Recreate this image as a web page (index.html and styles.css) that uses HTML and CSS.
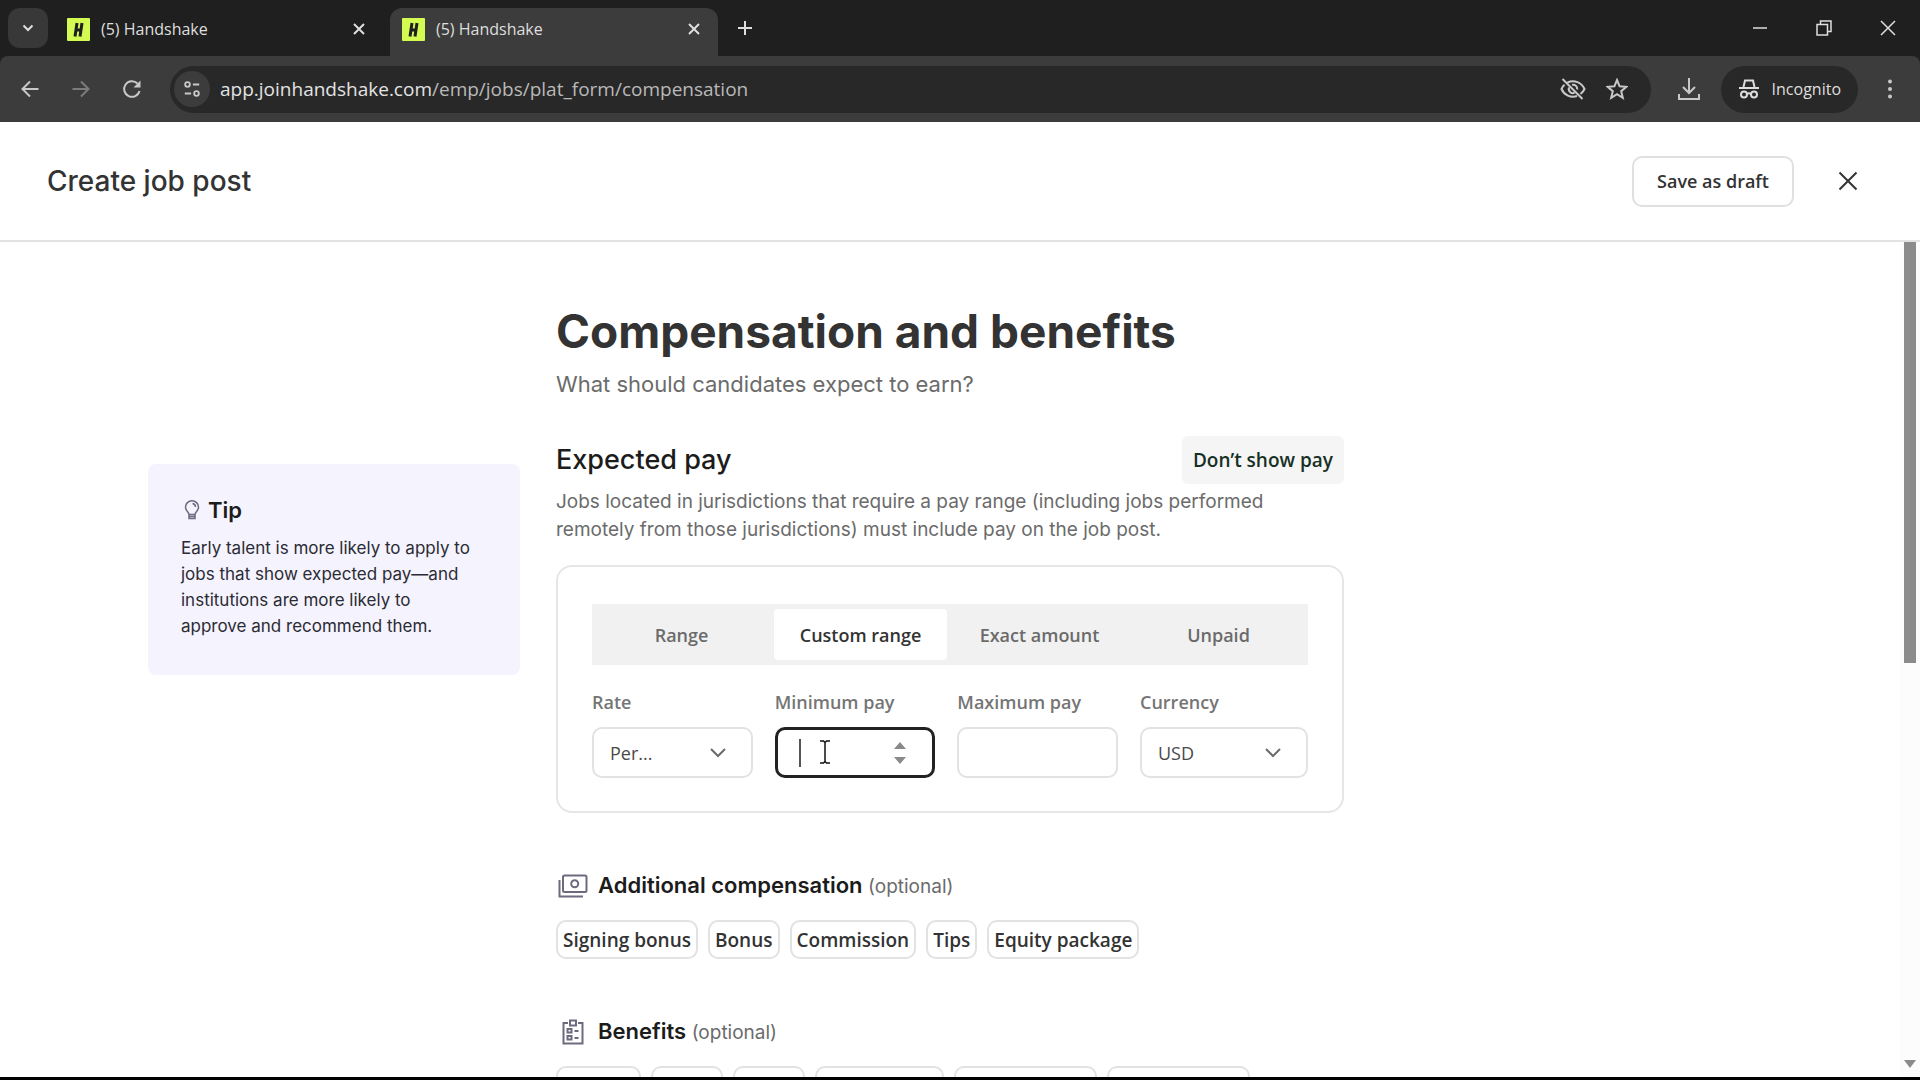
FILE: index.html
```html
<!DOCTYPE html>
<html lang="en">
<head>
    <meta charset="UTF-8">
    <meta name="viewport" content="width=device-width, initial-scale=1.0">
    <title>Handshake</title>
    <link rel="stylesheet" href="styles.css">
</head>
<body>
    <div class="browser">
        <div class="tab-strip">
            <button class="tab-search" aria-label="Search tabs">
                <svg width="14" height="14" viewBox="0 0 14 14"><path d="M2.500 4.500L7 9L11.500 4.500"/></svg>
            </button>
            <div class="tab">
                <svg class="favicon" viewBox="0 0 23 23"><rect width="23" height="23" rx="1"/><path d="M10 5L8 18.500M15 5L13 18.500M9 12H14"/></svg>
                <span class="tab-title">(5) Handshake</span>
                <button class="icon-button" aria-label="Close tab">
                    <svg width="12" height="12" viewBox="0 0 12 12"><path d="M1 1L11 11M11 1L1 11"/></svg>
                </button>
            </div>
            <div class="tab tab-active">
                <svg class="favicon" viewBox="0 0 23 23"><rect width="23" height="23" rx="1"/><path d="M10 5L8 18.500M15 5L13 18.500M9 12H14"/></svg>
                <span class="tab-title">(5) Handshake</span>
                <button class="icon-button" aria-label="Close tab">
                    <svg width="12" height="12" viewBox="0 0 12 12"><path d="M1 1L11 11M11 1L1 11"/></svg>
                </button>
            </div>
            <button class="icon-button new-tab" aria-label="New tab">
                <svg width="16" height="16" viewBox="0 0 16 16"><path d="M8 1V15M1 8H15"/></svg>
            </button>
            <div class="window-controls">
                <button class="icon-button" aria-label="Minimize">
                    <svg width="16" height="16" viewBox="0 0 16 16"><path d="M1 8H15"/></svg>
                </button>
                <button class="icon-button" aria-label="Restore">
                    <svg width="16" height="16" viewBox="0 0 16 16"><path d="M1 4.500H11.500V15H1ZM4.500 4.500V1H15V11.500H11.500"/></svg>
                </button>
                <button class="icon-button" aria-label="Close window">
                    <svg width="16" height="16" viewBox="0 0 16 16"><path d="M1 1L15 15M15 1L1 15"/></svg>
                </button>
            </div>
        </div>

        <div class="toolbar">
            <div class="nav-buttons">
                <button class="icon-button" aria-label="Back">
                    <svg width="20" height="20" viewBox="0 0 20 20"><path d="M18.500 10H2.500M10 2.500L2.500 10L10 17.500"/></svg>
                </button>
                <button class="icon-button dim" aria-label="Forward">
                    <svg width="20" height="20" viewBox="0 0 20 20"><path d="M1.500 10H17.500M10 2.500L17.500 10L10 17.500"/></svg>
                </button>
                <button class="icon-button" aria-label="Reload">
                    <svg width="20" height="20" viewBox="0 0 20 20"><path d="M17.500 12A7.800 7.800 0 1 1 15.500 4.500"/><path class="solid" d="M18.500 1.500V8.500H11.500Z"/></svg>
                </button>
            </div>
            <div class="address-bar">
                <span class="site-info">
                    <svg width="18" height="18" viewBox="0 0 20 20"><circle cx="5" cy="5" r="2.600"/><path d="M11 5H18M2 15H9"/><circle cx="15" cy="15" r="2.600"/></svg>
                </span>
                <span class="url">app.joinhandshake.com<span class="url-path">/emp/jobs/plat_form/compensation</span></span>
                <button class="icon-button" aria-label="Third-party cookies blocked">
                    <svg width="26" height="24" viewBox="0 0 26 24"><path d="M7.500 5.500A12.500 12.500 0 0 1 24.500 12A12.500 12.500 0 0 1 20.500 17M17 19A12.500 12.500 0 0 1 1.500 12A12 12 0 0 1 4.500 7.800M12 7.800A4.200 4.200 0 0 1 17.200 12.500M9 10.500A4.200 4.200 0 0 0 14.500 15.800M2.500 2L22.500 22"/></svg>
                </button>
                <button class="icon-button" aria-label="Bookmark this tab">
                    <svg width="22" height="22" viewBox="0 0 22 22"><path d="M11 2L13.600 8.300L20.300 8.800L15.200 13.200L16.800 19.800L11 16.200L5.200 19.800L6.800 13.200L1.700 8.800L8.400 8.300Z"/></svg>
                </button>
            </div>
            <button class="icon-button downloads" aria-label="Downloads">
                <svg width="24" height="24" viewBox="0 0 24 24"><path d="M12 1V15.500M6 10L12 16L18 10M2 17V22H22V17"/></svg>
            </button>
            <button class="incognito">
                <svg width="22" height="20" viewBox="0 0 22 20"><path d="M5.500 8L7 1.500H15L16.500 8M1 9H21"/><circle cx="6" cy="15.500" r="3"/><circle cx="16" cy="15.500" r="3"/><path d="M9 15Q11 13.500 13 15"/></svg>
                Incognito
            </button>
            <button class="icon-button menu" aria-label="Menu">
                <svg width="6" height="20" viewBox="0 0 6 20"><circle cx="3" cy="2.500" r="2"/><circle cx="3" cy="10" r="2"/><circle cx="3" cy="17.500" r="2"/></svg>
            </button>
        </div>

        <header class="page-header">
            <span class="page-title">Create job post</span>
            <button class="save-button">Save as draft</button>
            <button class="close-button" aria-label="Close">
                <svg width="20" height="20" viewBox="0 0 20 20"><path d="M1.500 1.500L18.500 18.500M18.500 1.500L1.500 18.500"/></svg>
            </button>
        </header>

        <div class="viewport">
            <main class="content">
                <aside class="tip">
                    <h2 class="tip-title">
                        <svg width="16" height="20" viewBox="0 0 16 20"><path d="M5 14.500C5 12 1.500 11 1.500 7A6.500 6.200 0 0 1 14.500 7C14.500 11 11 12 11 14.500ZM5 14.500V18.500H11V14.500M5 16.500H11M8.500 3.500Q11.500 4 11.500 7"/></svg>
                        Tip
                    </h2>
                    <p class="tip-text">Early talent is more likely to apply to jobs that show expected pay—and institutions are more likely to approve and recommend them.</p>
                </aside>

                <form class="form">
                    <h1>Compensation and benefits</h1>
                    <p class="subtitle">What should candidates expect to earn?</p>

                    <div class="section-head">
                        <h2>Expected pay</h2>
                        <button type="button" class="hide-pay">Don’t show pay</button>
                    </div>
                    <p class="section-text">Jobs located in jurisdictions that require a pay range (including jobs performed remotely from those jurisdictions) must include pay on the job post.</p>

                    <div class="pay-card">
                        <div class="segments">
                            <button type="button" class="segment">Range</button>
                            <button type="button" class="segment segment-active">Custom range</button>
                            <button type="button" class="segment">Exact amount</button>
                            <button type="button" class="segment">Unpaid</button>
                        </div>
                        <div class="fields">
                            <div class="field">
                                <label for="rate">Rate</label>
                                <div class="control">
                                    <select id="rate"><option>Per...</option></select>
                                    <svg class="chevron" width="18" height="12" viewBox="0 0 18 12"><path d="M2 2L9 9L16 2"/></svg>
                                </div>
                            </div>
                            <div class="field">
                                <label for="minPay">Minimum pay</label>
                                <div class="control">
                                    <input id="minPay" type="text" class="focused">
                                    <span class="caret"></span>
                                    <svg class="pointer" width="12" height="24" viewBox="0 0 12 24"><path d="M1 1H4.500L6 2.500L7.500 1H11M6 2.500V21.500M1 23H4.500L6 21.500L7.500 23H11"/></svg>
                                    <svg class="spinner" width="12" height="22" viewBox="0 0 12 22"><path d="M0 7L6 0L12 7ZM0 15L6 22L12 15Z"/></svg>
                                </div>
                            </div>
                            <div class="field">
                                <label for="maxPay">Maximum pay</label>
                                <div class="control">
                                    <input id="maxPay" type="text">
                                </div>
                            </div>
                            <div class="field">
                                <label for="currency">Currency</label>
                                <div class="control">
                                    <select id="currency"><option>USD</option></select>
                                    <svg class="chevron" width="18" height="12" viewBox="0 0 18 12"><path d="M2 2L9 9L16 2"/></svg>
                                </div>
                            </div>
                        </div>
                    </div>

                    <h3>
                        <svg width="30" height="24" viewBox="0 0 30 24"><rect x="5" y="1.500" width="23.500" height="16.500" rx="1.500"/><circle cx="16.700" cy="9.700" r="3.500"/><path d="M1.500 6V22.500H25"/></svg>
                        <span>Additional compensation <span class="optional">(optional)</span></span>
                    </h3>
                    <div class="chips">
                        <button type="button" class="chip">Signing bonus</button>
                        <button type="button" class="chip">Bonus</button>
                        <button type="button" class="chip">Commission</button>
                        <button type="button" class="chip">Tips</button>
                        <button type="button" class="chip">Equity package</button>
                    </div>

                    <h3>
                        <svg width="30" height="26" viewBox="0 0 30 26"><path d="M10 4H5.500V24.500H24.500V4H20"/><rect x="12" y="1.500" width="6" height="5"/><rect x="9.500" y="10" width="4" height="3.500"/><rect x="9.500" y="17" width="4" height="3.500"/><path d="M16.500 12H20.500M16.500 19H20.500"/></svg>
                        <span>Benefits <span class="optional">(optional)</span></span>
                    </h3>
                    <div class="chips">
                        <button type="button" class="chip chip-md"></button>
                        <button type="button" class="chip chip-sm"></button>
                        <button type="button" class="chip chip-sm"></button>
                        <button type="button" class="chip chip-lg"></button>
                        <button type="button" class="chip chip-xl"></button>
                        <button type="button" class="chip chip-xl"></button>
                    </div>
                </form>
            </main>
            <div class="scrollbar">
                <div class="scroll-thumb"></div>
                <svg width="12" height="8" viewBox="0 0 12 8"><path d="M0 0H12L6 8Z"/></svg>
            </div>
        </div>
    </div>
</body>
</html>
```
FILE: styles.css
```css
* {
    box-sizing: border-box;
}
body {
    margin: 0;
    background-color: #1f1f1f;
    font-family: Inter, Arial, sans-serif;
    color: #1c1c1c;
}
h1, h2, h3, p {
    margin: 0;
}
svg {
    display: block;
    flex: none;
    fill: none;
    stroke: currentColor;
    stroke-width: 2;
}
button, input, select {
    margin: 0;
    font-family: "Open Sans", "Segoe UI", sans-serif;
    color: inherit;
}
button {
    cursor: pointer;
}
.browser {
    display: flex;
    flex-direction: column;
    height: 100vh;
    overflow: hidden;
    border-bottom: 3px solid #000;
}

/* browser chrome */
.tab-strip {
    display: flex;
    align-items: flex-start;
    height: 56px;
    padding: 8px 0 0 8px;
    color: #dedede;
    font-family: "Open Sans", sans-serif;
}
.icon-button {
    display: flex;
    align-items: center;
    justify-content: center;
    width: 24px;
    height: 24px;
    padding: 0;
    background: none;
    border: none;
}
.tab-search {
    display: flex;
    align-items: center;
    justify-content: center;
    width: 40px;
    height: 40px;
    padding: 0;
    background-color: #383838;
    border: none;
    border-radius: 12px;
}
.tab {
    display: flex;
    align-items: center;
    width: 328px;
    height: 48px;
    padding: 0 12px 6px 12px;
    border-radius: 12px 12px 0 0;
}
.tab-search + .tab {
    margin: 0 7px;
}
.tab-active {
    background-color: #3c3c3c;
}
.favicon {
    width: 23px;
    height: 23px;
    stroke: #1f1f1f;
    stroke-width: 3;
}
.favicon rect {
    fill: #d3fb52;
    stroke: none;
}
.tab-title {
    flex: 1;
    padding-left: 11px;
    font-size: 16px;
    line-height: 24px;
}
.new-tab {
    margin: 8px 0 0 15px;
}
.window-controls {
    display: flex;
    gap: 40px;
    margin: 8px 20px 0 auto;
}
.window-controls svg {
    stroke-width: 1.5;
}
.toolbar {
    display: flex;
    align-items: center;
    height: 66px;
    padding: 0 18px;
    border-radius: 8px 8px 0 0;
    background-color: #3c3c3c;
    color: #c8c8c8;
}
.nav-buttons {
    display: flex;
    gap: 27px;
}
.solid {
    fill: currentColor;
    stroke: none;
}
.dim {
    color: #7c7c7c;
}
.address-bar {
    display: flex;
    flex: 1;
    align-items: center;
    gap: 20px;
    height: 47px;
    margin-left: 26px;
    padding: 0 22px 0 4px;
    border-radius: 24px;
    background-color: #282828;
}
.site-info {
    display: flex;
    align-items: center;
    justify-content: center;
    width: 36px;
    height: 36px;
    border-radius: 50%;
    background-color: #3c3c3c;
}
.url {
    flex: 1;
    margin-left: -10px;
    font-family: "Open Sans", sans-serif;
    font-size: 19px;
    line-height: 26px;
    color: #e3e3e3;
}
.url-path {
    color: #b9b9b9;
}
.downloads {
    margin: 0 20px 0 26px;
}
.incognito {
    display: flex;
    align-items: center;
    gap: 12px;
    height: 47px;
    padding: 0 17px;
    border: none;
    border-radius: 24px;
    background-color: #282828;
    font-size: 16px;
    color: #dedede;
}
.menu {
    margin-left: 20px;
}
.menu svg {
    fill: currentColor;
    stroke: none;
}

/* page header */
.page-header {
    display: flex;
    align-items: center;
    height: 120px;
    padding: 0 50px 0 47px;
    border-bottom: 2px solid #e2e2e2;
    background-color: #fff;
    color: #333;
}
.page-title {
    flex: 1;
    font-size: 28px;
    line-height: 36px;
    font-weight: 500;
}
.save-button {
    height: 51px;
    padding: 0 23px;
    border: 2px solid #e0e0e0;
    border-radius: 10px;
    background-color: #fff;
    font-size: 18px;
    font-weight: 600;
}
.close-button {
    display: flex;
    margin-left: 32px;
    padding: 12px;
    border: none;
    background: none;
}

/* scrolling area */
.viewport {
    display: flex;
    flex: 1;
    min-height: 0;
    overflow: hidden;
    background-color: #fff;
}
.content {
    display: grid;
    flex: 1;
    grid-template-columns: 1fr 788px 1fr;
    align-items: start;
    padding-top: 62px;
}
.scrollbar {
    display: flex;
    flex-direction: column;
    align-items: center;
    justify-content: space-between;
    width: 20px;
    padding-bottom: 9px;
    background-color: #fcfcfc;
}
.scroll-thumb {
    width: 12px;
    height: 51%;
    background-color: #8b8b8b;
}
.scrollbar svg {
    fill: #8b8b8b;
    stroke: none;
}

.tip {
    justify-self: end;
    width: 372px;
    margin: 160px 36px 0 0;
    padding: 32px 44px 36px 33px;
    border-radius: 8px;
    background-color: #f4f3fe;
}
.tip-title {
    display: flex;
    align-items: center;
    gap: 8px;
    padding-left: 3px;
    font-size: 22px;
    line-height: 28px;
    font-weight: 600;
}
.tip-title svg {
    color: #6d6a80;
    stroke-width: 1.5;
}
.tip-text {
    margin-top: 11px;
    font-size: 17px;
    line-height: 26px;
    color: #2b2b33;
}

.form h1 {
    font-size: 46px;
    line-height: 54px;
    font-weight: 700;
    color: #333;
}
.subtitle {
    margin-top: 10px;
    font-size: 22px;
    line-height: 32px;
    color: #6b6b6b;
}
.section-head {
    display: flex;
    align-items: center;
    justify-content: space-between;
    margin-top: 36px;
}
.section-head h2 {
    font-size: 27px;
    line-height: 36px;
    font-weight: 500;
}
.hide-pay {
    height: 48px;
    padding: 0 11px;
    border: none;
    border-radius: 6px;
    background-color: #f5f5f5;
    font-size: 19px;
    font-weight: 600;
    color: #173026;
}
.section-text {
    margin-top: 4px;
    font-size: 19px;
    line-height: 28px;
    color: #6b6b6b;
}
.pay-card {
    margin-top: 21px;
    padding: 37px 34px 33px;
    border: 2px solid #e6e6e6;
    border-radius: 16px;
}
.segments {
    display: grid;
    grid-template-columns: repeat(4, 1fr);
    padding: 5px 0;
    background-color: #f1f1f1;
}
.segment {
    height: 51px;
    margin: 0 3px;
    border: none;
    border-radius: 4px;
    background: none;
    font-size: 18px;
    font-weight: 600;
    color: #6b6b6b;
}
.segment-active {
    background-color: #fff;
    color: #333;
}
.fields {
    display: grid;
    grid-template-columns: 1fr 1fr 1fr 168px;
    gap: 22px;
    margin-top: 24px;
}
.field label {
    display: block;
    font-family: "Open Sans", sans-serif;
    font-size: 18px;
    line-height: 26px;
    font-weight: 600;
    color: #757575;
}
.control {
    position: relative;
    margin-top: 12px;
}
.control input, .control select {
    display: block;
    width: 100%;
    height: 51px;
    padding: 0 16px;
    border: 2px solid #e2e2e2;
    border-radius: 10px;
    background-color: #fff;
    font-size: 18px;
    color: #4a4a4a;
    outline: none;
    appearance: none;
}
.control .focused {
    border: 3px solid #222;
}
.chevron {
    position: absolute;
    top: 20px;
    right: 26px;
    color: #6b6b6b;
    pointer-events: none;
}
.caret {
    position: absolute;
    top: 12px;
    left: 24px;
    width: 2px;
    height: 28px;
    background-color: #555;
}
.pointer {
    position: absolute;
    top: 13px;
    left: 44px;
    color: #111;
    stroke-width: 1.5;
}
.spinner {
    position: absolute;
    top: 15px;
    right: 29px;
    fill: #8a8a8a;
    stroke: none;
}

.form h3 {
    display: flex;
    align-items: center;
    gap: 10px;
    margin-top: 58px;
    padding-left: 2px;
    font-size: 22px;
    line-height: 28px;
    font-weight: 600;
}
.form h3 svg {
    color: #6d6a80;
}
.form h3 .optional {
    font-size: 19px;
    font-weight: 400;
    color: #6b6b6b;
}
.chips {
    display: flex;
    gap: 10px;
    margin-top: 19px;
}
.chip {
    height: 39px;
    padding: 0 5px;
    border: 2px solid #e2e2e2;
    border-radius: 10px;
    background-color: #fff;
    font-size: 19px;
    font-weight: 600;
    color: #333;
}
.chip-sm {
    width: 72px;
}
.chip-md {
    width: 85px;
}
.chip-lg {
    width: 129px;
}
.chip-xl {
    width: 143px;
}
```
